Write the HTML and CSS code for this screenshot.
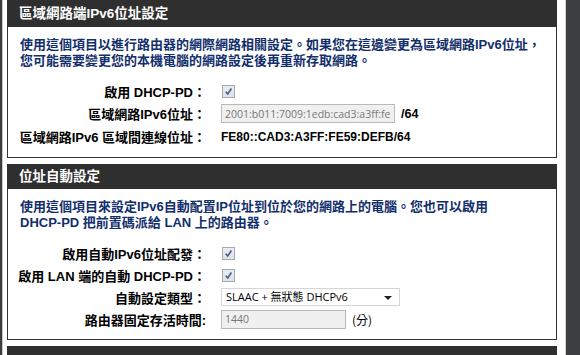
FILE: index.html
```html
<!DOCTYPE html>
<html lang="zh-Hant">
<head>
    <meta charset="UTF-8">
    <title>IPv6 區域網路設定</title>
    <link rel="stylesheet" href="styles.css">
</head>
<body>
    <div class="page">
        <div class="edge"></div>
        <main class="content">
            <section class="panel">
                <h2 class="panel-title first">區域網路端IPv6位址設定</h2>
                <div class="panel-body">
                    <p class="intro">使用這個項目以進行路由器的網際網路相關設定。如果您在這邊變更為區域網路IPv6位址，<br>您可能需要變更您的本機電腦的網路設定後再重新存取網路。</p>
                    <div class="form">
                        <div class="row">
                            <span class="label">啟用 DHCP-PD：</span>
                            <span class="check"><svg viewBox="0 0 12 12"><path d="M3 6.2 L5.2 8.6 L9.2 2.8" /></svg></span>
                        </div>
                        <div class="row tall">
                            <span class="label">區域網路IPv6位址：</span>
                            <span class="value">
                                <input class="field wide" type="text" value="2001:b011:7009:1edb:cad3:a3ff:fe59:defb" disabled>
                                <b class="suffix">/64</b>
                            </span>
                        </div>
                        <div class="row tall">
                            <span class="label">區域網路IPv6 區域間連線位址：</span>
                            <b class="value plain">FE80::CAD3:A3FF:FE59:DEFB/64</b>
                        </div>
                    </div>
                </div>
            </section>

            <section class="panel">
                <h2 class="panel-title">位址自動設定</h2>
                <div class="panel-body">
                    <p class="intro">使用這個項目來設定IPv6自動配置IP位址到位於您的網路上的電腦。您也可以啟用<br>DHCP-PD 把前置碼派給 LAN 上的路由器。</p>
                    <div class="form">
                        <div class="row">
                            <span class="label">啟用自動IPv6位址配發：</span>
                            <span class="check"><svg viewBox="0 0 12 12"><path d="M3 6.2 L5.2 8.6 L9.2 2.8" /></svg></span>
                        </div>
                        <div class="row roomy">
                            <span class="label">啟用 LAN 端的自動 DHCP-PD：</span>
                            <span class="check"><svg viewBox="0 0 12 12"><path d="M3 6.2 L5.2 8.6 L9.2 2.8" /></svg></span>
                        </div>
                        <div class="row roomy">
                            <span class="label">自動設定類型：</span>
                            <span class="select">SLAAC + 無狀態 DHCPv6<i class="arrow"></i></span>
                        </div>
                        <div class="row roomy">
                            <span class="label">路由器固定存活時間:</span>
                            <span class="value">
                                <input class="field short" type="text" value="1440" disabled>
                                <span class="unit">(分)</span>
                            </span>
                        </div>
                    </div>
                </div>
            </section>

            <div class="panel-title next"></div>
        </main>
        <div class="rail"></div>
    </div>
</body>
</html>
```

FILE: styles.css
```css
body {
    margin: 0;
    background: #fff;
    font-family: 'Liberation Sans', 'Noto Sans CJK TC', sans-serif;
    font-size: 12px;
    color: #000;
}

.page {
    display: flex;
    height: 355px;
    overflow: hidden;
}

.edge {
    width: 2px;
    background: #3d3d3d;
    border-right: 1px solid #c8c8c8;
    flex-shrink: 0;
}

.content {
    width: 550px;
    padding-left: 4px;
    flex-shrink: 0;
}

.rail {
    width: 15px;
    margin-left: 8px;
    background: #3b3f42;
    border-left: 1px solid #d0d0d0;
    flex-shrink: 0;
}

.panel {
    margin-bottom: 6px;
}

.panel-title {
    margin: 0;
    height: 25px;
    line-height: 25px;
    padding-left: 12px;
    background: #2f2f2f;
    color: #fff;
    font-size: 13.5px;
    font-weight: bold;
}

.panel-title.first {
    height: 27px;
    line-height: 27px;
}

.panel-body {
    border: 1px solid #333;
    border-top: none;
    padding: 10px 0 9px;
}

.intro {
    margin: 0 0 12px 12px;
    color: #122e6b;
    font-weight: bold;
    font-size: 13px;
    line-height: 16px;
    white-space: nowrap;
}

.row {
    display: grid;
    grid-template-columns: 198px 1fr;
    column-gap: 15px;
    align-items: center;
    height: 21px;
}

.row.tall {
    height: 23px;
}

.row.roomy {
    height: 22px;
}

.label {
    text-align: right;
    font-weight: bold;
    font-size: 13px;
    white-space: nowrap;
}

.value {
    display: flex;
    align-items: center;
    gap: 6px;
}

.plain {
    font-size: 12px;
}

.check {
    width: 11px;
    height: 11px;
    border: 1px solid #a7abb0;
    background: linear-gradient(#e9ecf1, #dde3ea);
    margin-left: 1px;
}

.check svg {
    display: block;
    width: 11px;
    height: 11px;
}

.check path {
    fill: none;
    stroke: #4c5f87;
    stroke-width: 1.8;
}

.field {
    box-sizing: border-box;
    height: 19px;
    padding: 0 3px;
    border: 1px solid #b9b9b9;
    background: #f0f0f0;
    color: #777;
    font-family: 'Open Sans', sans-serif;
    font-size: 10.5px;
}

.wide {
    width: 174px;
}

.short {
    width: 125px;
}

.suffix {
    font-size: 12.5px;
}

.unit {
    font-family: 'Noto Sans CJK TC', sans-serif;
    font-size: 12px;
}

.select {
    box-sizing: border-box;
    position: relative;
    width: 179px;
    height: 18px;
    padding-left: 4px;
    border: 1px solid #d6d6d6;
    background: #fff;
    font-family: 'Open Sans', 'Noto Sans CJK TC', sans-serif;
    font-size: 11px;
    line-height: 16px;
}

.arrow {
    position: absolute;
    right: 7px;
    top: 7px;
    border-left: 4px solid transparent;
    border-right: 4px solid transparent;
    border-top: 4px solid #222;
}

.panel-title.next {
    height: 10px;
}
```
